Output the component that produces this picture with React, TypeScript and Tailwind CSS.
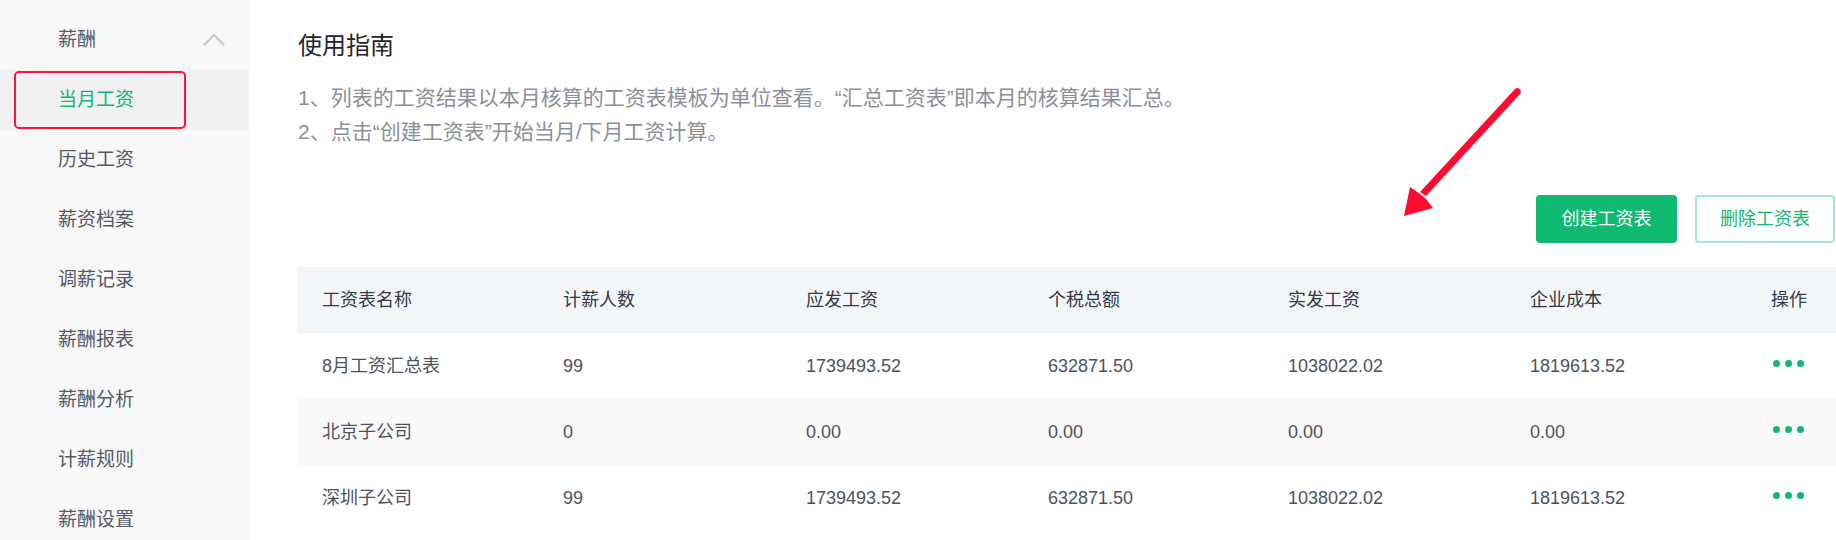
const font = { fontFamily: '"Liberation Sans", "Noto Sans CJK SC", sans-serif' };

const menu = ['当月工资', '历史工资', '薪资档案', '调薪记录', '薪酬报表', '薪酬分析', '计薪规则', '薪酬设置'];

const columns = ['工资表名称', '计薪人数', '应发工资', '个税总额', '实发工资', '企业成本'];

const rows = [
  ['8月工资汇总表', '99', '1739493.52', '632871.50', '1038022.02', '1819613.52'],
  ['北京子公司', '0', '0.00', '0.00', '0.00', '0.00'],
  ['深圳子公司', '99', '1739493.52', '632871.50', '1038022.02', '1819613.52'],
];

function Dots() {
  return (
    <span className="flex items-center gap-[5px] pl-[2px]">
      <span className="h-[7px] w-[7px] rounded-full bg-[#10b972]" />
      <span className="h-[7px] w-[7px] rounded-full bg-[#10b972]" />
      <span className="h-[7px] w-[7px] rounded-full bg-[#10b972]" />
    </span>
  );
}

function Sidebar() {
  return (
    <aside className="w-[249px] shrink-0 bg-[#f8f8f9] pt-[10px]">
      <div className="flex h-[60px] items-center justify-between pl-[58px] pr-[24px] text-[19px] text-[#555a64]">
        <span>薪酬</span>
        <svg width="22" height="13" viewBox="0 0 22 13" fill="none" className="mb-[2px]">
          <path d="M1.5 11.5L11 2l9.5 9.5" stroke="#c6c9cf" strokeWidth="2.2" strokeLinecap="round" strokeLinejoin="round" />
        </svg>
      </div>
      {menu.map((item, i) => (
        <div
          key={item}
          className={
            i === 0
              ? 'relative flex h-[60px] items-center bg-[#f1f1f2] pl-[58px] text-[19px] text-[#14b673]'
              : 'flex h-[60px] items-center pl-[58px] text-[19px] text-[#555a64]'
          }
        >
          {item}
          {i === 0 && (
            <span className="absolute left-[14px] top-[1px] h-[58px] w-[172px] rounded-[5px] border-[2.5px] border-[#ff1438]" />
          )}
        </div>
      ))}
    </aside>
  );
}

function Arrow() {
  return (
    <svg className="pointer-events-none absolute left-[1396px] top-[84px]" width="132" height="140" viewBox="1396 84 132 140">
      <path d="M1515 89 C1518 86 1523 91 1520 94 L1426 196 L1420 192 Z" fill="#ff0a30" />
      <polygon points="1404,216 1410,187 1420,194 1426,199 1433,208" fill="#ff0a30" />
    </svg>
  );
}

const grid = 'grid h-[66px] grid-cols-[241px_243px_242px_240px_242px_241px_1fr] items-center pl-[25px]';

export default function App() {
  return (
    <div className="relative flex h-[540px] w-[1836px] overflow-hidden bg-white" style={font}>
      <Sidebar />
      <main className="min-w-0 flex-1 pl-[48px]">
        <h2 className="pl-[1px] pt-[34px] text-[24px] leading-[24px] text-[#1f2430]">使用指南</h2>
        <div className="mt-[23px] pl-[1px] text-[21px] leading-[34px] text-[#8b8f98]">
          <p>1、列表的工资结果以本月核算的工资表模板为单位查看。“汇总工资表”即本月的核算结果汇总。</p>
          <p>2、点击“创建工资表”开始当月/下月工资计算。</p>
        </div>
        <div className="mt-[46px] flex justify-end gap-[18px] pr-[1px]">
          <button className="h-[48px] w-[141px] rounded-[4px] bg-[#10b972] text-[18px] text-white">创建工资表</button>
          <button className="h-[48px] w-[140px] rounded-[4px] border-2 border-[#a9e7cd] bg-white text-[18px] text-[#14b673]">删除工资表</button>
        </div>
        <div className="mt-[24px] text-[18px]">
          <div className={`${grid} bg-[#f3f6f9] text-[#353a46]`}>
            {columns.map((c) => (
              <span key={c}>{c}</span>
            ))}
            <span>操作</span>
          </div>
          {rows.map((r, i) => (
            <div key={i} className={`${grid} ${i === 1 ? 'bg-[#f9f9fa]' : 'bg-white'} text-[#4d5260]`}>
              {r.map((cell, j) => (
                <span key={j}>{cell}</span>
              ))}
              <span className="-mt-[6px]">
                <Dots />
              </span>
            </div>
          ))}
        </div>
      </main>
      <Arrow />
    </div>
  );
}
